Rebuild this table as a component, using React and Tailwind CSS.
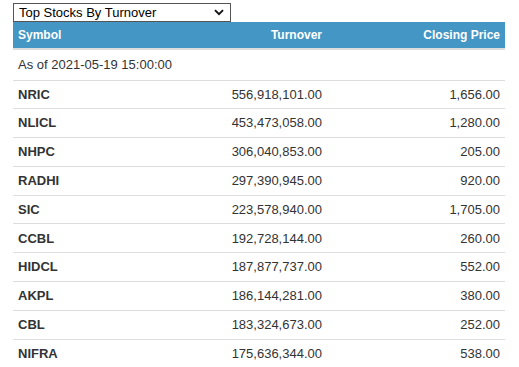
import React from 'react';

const rows = [
  { symbol: 'NRIC', turnover: '556,918,101.00', close: '1,656.00' },
  { symbol: 'NLICL', turnover: '453,473,058.00', close: '1,280.00' },
  { symbol: 'NHPC', turnover: '306,040,853.00', close: '205.00' },
  { symbol: 'RADHI', turnover: '297,390,945.00', close: '920.00' },
  { symbol: 'SIC', turnover: '223,578,940.00', close: '1,705.00' },
  { symbol: 'CCBL', turnover: '192,728,144.00', close: '260.00' },
  { symbol: 'HIDCL', turnover: '187,877,737.00', close: '552.00' },
  { symbol: 'AKPL', turnover: '186,144,281.00', close: '380.00' },
  { symbol: 'CBL', turnover: '183,324,673.00', close: '252.00' },
  { symbol: 'NIFRA', turnover: '175,636,344.00', close: '538.00' },
];

const App = () => {
  return (
    <div className="min-h-screen bg-white pl-[13px] pt-[3px] font-['Liberation_Sans',Arial,sans-serif] text-[13px] text-[#333]">
      {/* Selector */}
      <div className="flex h-[19px] w-[218px] items-center justify-between border border-[#555] bg-white pl-[5px] pr-[6px] text-[13px] leading-none text-black">
        <span>Top Stocks By Turnover</span>
        <svg width="10" height="7" viewBox="0 0 10 7">
          <path d="M1 1.2 L5 5.2 L9 1.2" fill="none" stroke="#111" strokeWidth="1.9" />
        </svg>
      </div>

      {/* Table */}
      <table className="w-[492px] table-fixed border-collapse">
        <colgroup>
          <col className="w-[180px]" />
          <col className="w-[134px]" />
          <col className="w-[178px]" />
        </colgroup>
        <thead>
          <tr className="h-[27px] bg-[#4496c4] text-[12px] font-bold text-white">
            <th className="border-b-2 border-[#ddd] px-[5px] text-left">Symbol</th>
            <th className="border-b-2 border-[#ddd] px-[5px] text-right">Turnover</th>
            <th className="border-b-2 border-[#ddd] px-[5px] text-right">Closing Price</th>
          </tr>
        </thead>
        <tbody>
          <tr className="h-[31px] border-b border-[#ddd]">
            <td colSpan={3} className="px-[5px]">As of 2021-05-19 15:00:00</td>
          </tr>
          {rows.map((r) => (
            <tr key={r.symbol} className="h-[28.8px] border-b border-[#ddd]">
              <td className="px-[5px] font-bold">{r.symbol}</td>
              <td className="px-[5px] text-right">{r.turnover}</td>
              <td className="px-[5px] text-right">{r.close}</td>
            </tr>
          ))}
        </tbody>
      </table>
    </div>
  );
};

export default App;
